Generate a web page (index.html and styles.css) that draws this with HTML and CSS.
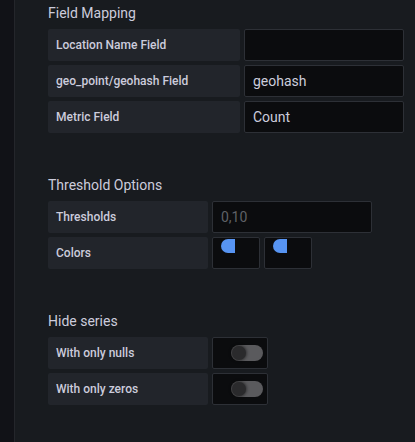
FILE: index.html
```html
<!DOCTYPE html>
<html>
<head>
<meta charset="utf-8">
<link rel="stylesheet" href="styles.css">
</head>
<body>
<div class="layout">
  <div class="sidebar"></div>
  <div class="main">
    <section class="section">
      <h3 class="heading">Field Mapping</h3>
      <div class="rows">
        <div class="row"><div class="label wide">Location Name Field</div><div class="input wide-input"></div></div>
        <div class="row"><div class="label wide">geo_point/geohash Field</div><div class="input wide-input">geohash</div></div>
        <div class="row"><div class="label wide">Metric Field</div><div class="input wide-input">Count</div></div>
      </div>
    </section>
    <section class="section">
      <h3 class="heading">Threshold Options</h3>
      <div class="rows">
        <div class="row"><div class="label">Thresholds</div><div class="input placeholder">0,10</div></div>
        <div class="row"><div class="label">Colors</div>
          <div class="swatch"><span class="dot"></span></div>
          <div class="swatch"><span class="dot"></span></div>
        </div>
      </div>
    </section>
    <section class="section">
      <h3 class="heading">Hide series</h3>
      <div class="rows">
        <div class="row"><div class="label">With only nulls</div><div class="switch-box"><span class="track"><span class="knob"></span></span></div></div>
        <div class="row"><div class="label">With only zeros</div><div class="switch-box"><span class="track"><span class="knob"></span></span></div></div>
      </div>
    </section>
  </div>
</div>
</body>
</html>
```
FILE: styles.css
```css
* { box-sizing: border-box; }
html, body {
  margin: 0;
  padding: 0;
  height: 100%;
  background: #181b1f;
  font-family: Roboto, "Liberation Sans", sans-serif;
  color: #ccccdc;
}
.layout {
  display: flex;
  height: 442px;
}
.sidebar {
  width: 15px;
  background: #111217;
  border-right: 1px solid #24262b;
  flex: none;
}
.main {
  flex: 1;
  padding: 3px 0 0 33px;
}
.section {
  margin-bottom: 42px;
}
.heading {
  margin: 0 0 6px 0;
  font-size: 14px;
  font-weight: 400;
  line-height: 20px;
  color: #ccccdc;
}
.rows {
  display: flex;
  flex-direction: column;
  gap: 4px;
}
.row {
  display: flex;
  gap: 4px;
  height: 32px;
}
.label {
  width: 160px;
  background: #22252b;
  border-radius: 2px;
  padding-left: 8px;
  display: flex;
  align-items: center;
  font-size: 12px;
  font-weight: 500;
  color: #ccccdc;
}
.label.wide { width: 192px; }
.input {
  width: 160px;
  background: #0b0c0e;
  border: 1px solid #2d3036;
  border-radius: 2px;
  padding-left: 8px;
  display: flex;
  align-items: center;
  font-size: 14px;
  color: #ccccdc;
}
.input.placeholder { color: #5f6166; }
.swatch {
  width: 48px;
  background: #0b0c0e;
  border: 1px solid #2d3036;
  border-radius: 2px;
  padding: 1px 0 0 8px;
}
.dot {
  display: block;
  width: 14px;
  height: 14px;
  background: #5794f2;
  border-radius: 7px 0 0 7px;
}
.switch-box {
  width: 56px;
  background: #0b0c0e;
  border: 1px solid #2d3036;
  border-radius: 2px;
  display: flex;
  align-items: center;
  padding-left: 18px;
}
.track {
  position: relative;
  display: block;
  width: 32px;
  height: 16px;
  border-radius: 8px;
  background: #5a5a5d;
}
.knob {
  position: absolute;
  left: 1px;
  top: 1px;
  width: 14px;
  height: 14px;
  border-radius: 50%;
  background: #2a2a2c;
  box-shadow: 0 0 3px 1px rgba(0,0,0,0.45);
}
```
